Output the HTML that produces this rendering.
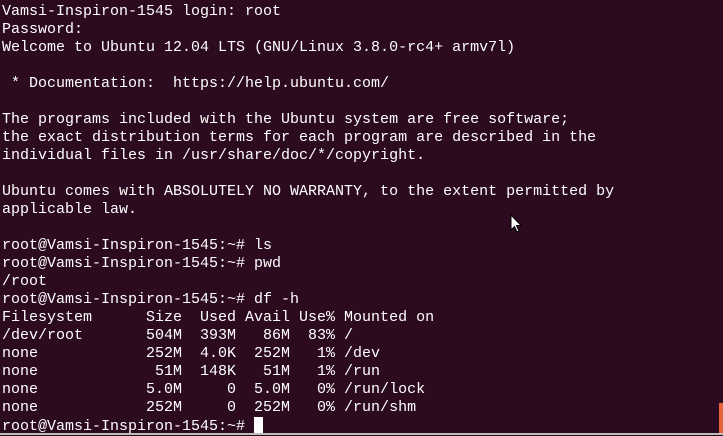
<!DOCTYPE html>
<html><head><meta charset="utf-8"><style>
html,body{margin:0;padding:0;}
body{width:723px;height:435px;background:#2c0a1f;overflow:hidden;position:relative;}
pre{margin:0;position:absolute;left:2px;top:3px;font-family:"Liberation Mono","DejaVu Sans Mono",monospace;font-size:15px;line-height:18px;color:#ffffff;white-space:pre;}
.cur{display:inline-block;width:9px;height:16px;background:#fff;vertical-align:-3px;}
.sb{position:absolute;left:719px;top:403px;width:4px;height:30px;background:#e9633a;}
.bl{position:absolute;left:0;top:433px;width:723px;height:2px;background:#bdbdbd;}
</style></head><body>
<pre>Vamsi-Inspiron-1545 login: root
Password:
Welcome to Ubuntu 12.04 LTS (GNU/Linux 3.8.0-rc4+ armv7l)

 * Documentation:  https://help.ubuntu.com/

The programs included with the Ubuntu system are free software;
the exact distribution terms for each program are described in the
individual files in /usr/share/doc/*/copyright.

Ubuntu comes with ABSOLUTELY NO WARRANTY, to the extent permitted by
applicable law.

root@Vamsi-Inspiron-1545:~# ls
root@Vamsi-Inspiron-1545:~# pwd
/root
root@Vamsi-Inspiron-1545:~# df -h
Filesystem      Size  Used Avail Use% Mounted on
/dev/root       504M  393M   86M  83% /
none            252M  4.0K  252M   1% /dev
none             51M  148K   51M   1% /run
none            5.0M     0  5.0M   0% /run/lock
none            252M     0  252M   0% /run/shm
root@Vamsi-Inspiron-1545:~# <span class="cur"></span></pre>
<div class="sb"></div>
<div class="bl"></div>
<svg style="position:absolute;left:510px;top:214px" width="14" height="20" viewBox="0 0 14 20"><path d="M1 1 L1 16 L4.5 12.5 L7 18 L9 17 L6.5 11.5 L11 11.5 Z" fill="#fff" stroke="#000" stroke-width="1"/></svg>
</body></html>
